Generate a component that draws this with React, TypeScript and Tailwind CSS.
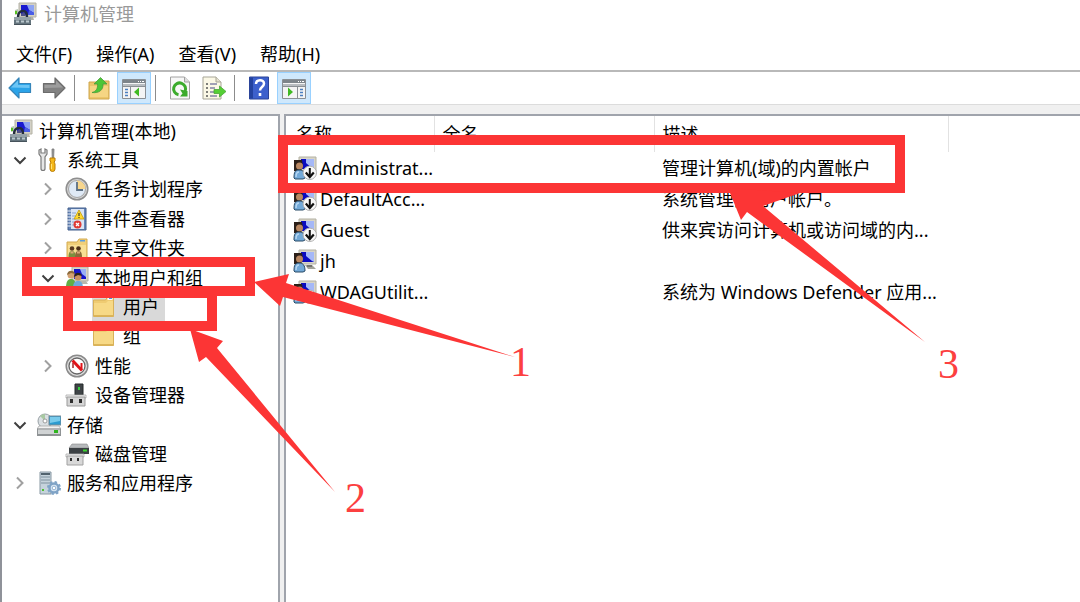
import { useState, type ReactNode } from "react";

/* ---------- icons ---------- */

function Svg({ size = 24, children }: { size?: number; children: ReactNode }) {
  return (
    <svg width={size} height={size} viewBox="0 0 24 24" aria-hidden="true" className="block shrink-0">
      {children}
    </svg>
  );
}

function ComputerIcon() {
  return (
    <Svg>
      <path d="M6 1h17v14H6z" fill="#d3d1c6" stroke="#b4b2a5" strokeWidth="1" />
      <path d="M8 3h13v10H8z" fill="#1a1ad0" />
      <path d="M14 3h7v8l-5-3z" fill="#8ea4f3" />
      <path d="M16 8l5 3v2h-6z" fill="#4a5ee6" />
      <path d="M15 15h5l1 3h-5z" fill="#b3b2a8" />
      <path d="M2 8l3-1 1 5-4 1z" fill="#b7c6b4" />
      <path d="M2 9h2v3H2z" fill="#58c322" />
      <path d="M5 15c0-4 2-6 5-6s4 2 4 6" fill="none" stroke="#222c3c" strokeWidth="2.400" />
      <path d="M8 12l3-2 2 4H8z" fill="#4c4f86" />
      <path d="M1 15h17v4H1z" fill="#94a1a8" />
      <path d="M1 18h17v5H1z" fill="#64747d" />
      <path d="M3 18.500h3v2H3zM8 18.500h3v2H8zM13 18.500h3v2h-3z" fill="#bac7cd" />
      <path d="M1 22h17v1H1z" fill="#46535b" />
    </Svg>
  );
}

function ToolsIcon() {
  return (
    <Svg>
      <path
        d="M2 2v4l2 3v11.500a2 2 0 0 0 4 0V9l2-3V2L8 1v4H4V1z"
        fill="#e6e6e6"
        stroke="#7b7b7b"
        strokeWidth="1.200"
      />
      <path d="M15 1h2l-.4 9h-1.400z" fill="#9a9a9a" stroke="#777" strokeWidth="0.800" />
      <path d="M13 10h5v3l-1 1 1 2v5a2 2 0 0 1-5 0v-5l1-2-1-1z" fill="#f5b819" stroke="#b97c08" strokeWidth="1" />
      <path d="M14.500 16v5" stroke="#ffe37a" strokeWidth="1" />
    </Svg>
  );
}

function ClockIcon() {
  return (
    <Svg>
      <circle cx="12" cy="12" r="10.800" fill="#d6d6d6" stroke="#8f8f8f" strokeWidth="1.500" />
      <circle cx="12" cy="12" r="8.500" fill="#dfe9f5" stroke="#a5a5a5" strokeWidth="1" />
      <path d="M12 12V3.500a8.500 8.500 0 0 1 8.500 8.500z" fill="#f8d68c" />
      <path d="M12 5v8h6" fill="none" stroke="#5c6f83" strokeWidth="1.800" />
    </Svg>
  );
}

function EventIcon() {
  return (
    <Svg>
      <path d="M3 1h18v22H3z" fill="#6585b7" stroke="#435f8c" strokeWidth="1" />
      <path d="M6 2h13v20H6z" fill="#d9e4f4" />
      <path d="M7 6h4M7 9h4M7 12h4M7 15h4M7 18h4" stroke="#8da5cd" strokeWidth="1" />
      <path d="M2 4h4M2 7h4M2 10h4M2 13h4M2 16h4M2 19h4" stroke="#e9eef6" strokeWidth="1.200" />
      <path d="M14 3l5 9H9z" fill="#ffd92e" stroke="#c59a08" strokeWidth="0.800" />
      <path d="M13.500 6h1v3h-1zM13.500 10h1v1h-1z" fill="#222" />
      <circle cx="12.500" cy="17.500" r="4" fill="#e03a35" />
      <path d="M11 16l3 3M14 16l-3 3" stroke="#fff" strokeWidth="1.300" />
    </Svg>
  );
}

function SharedFolderIcon() {
  return (
    <Svg>
      <path d="M2 6h10l2-3h8v19H2z" fill="#f1cf78" stroke="#d3ab50" strokeWidth="1" />
      <path d="M15 4h5v1.500h-5z" fill="#5b9fe0" />
      <path d="M3 9h18v12H3z" fill="#f8df95" />
      <circle cx="7" cy="12.500" r="2.300" fill="#5a3a20" />
      <circle cx="13.500" cy="12.500" r="2.300" fill="#4e3018" />
      <path d="M3.500 21c0-4 1-6 3.500-6s3.500 2 3.500 6z" fill="#7a8f3e" />
      <path d="M10 21c0-4 1-6 3.500-6s3.500 2 3.500 6z" fill="#8a6a3a" />
      <path d="M5.500 15.500h3v2h-3zM12 15.500h3v2h-3z" fill="#d9a878" />
    </Svg>
  );
}

function UsersIcon() {
  return (
    <Svg>
      <path d="M7 1h16v14H7z" fill="#d8d5c7" stroke="#b3b1a3" strokeWidth="1" />
      <path d="M9 3h12v10H9z" fill="#1414cc" />
      <path d="M15 3h6v8l-4-3z" fill="#9ab0f5" />
      <path d="M14 15h7l2 3h-8z" fill="#b9b8ad" />
      <circle cx="6" cy="9" r="3.500" fill="#d2a071" />
      <path d="M2 9c0-5 7-6 8-1l-4-1z" fill="#8c6a3c" />
      <path d="M1 22c0-7 2-9 5-9s5 2 5 9z" fill="#63ad46" />
      <circle cx="13" cy="11" r="3.500" fill="#c78f60" />
      <path d="M9 11c0-5 7-6 8-1l-4-1z" fill="#2b211a" />
      <path d="M8 23c0-7 2-8 5-8s5 1 5 8z" fill="#6fa9db" />
    </Svg>
  );
}

function FolderIcon() {
  return (
    <Svg>
      <path d="M.5 5h12l2-3h6v19.500H.5z" fill="#efcb72" stroke="#d8b15a" strokeWidth="1" />
      <path d="M14.500 3h5v2h-5z" fill="#fff" />
      <path d="M16 3h3v1h-3z" fill="#4d98e0" />
      <path d="M1 8h12l2-2h5v15H1z" fill="#f7d986" />
      <path d="M1 20h19.500v1.500H1z" fill="#dcb559" />
    </Svg>
  );
}

function PerformanceIcon() {
  return (
    <Svg>
      <circle cx="12" cy="12" r="10.800" fill="#dedede" stroke="#8a8a8a" strokeWidth="1.500" />
      <circle cx="12" cy="12" r="8" fill="#fff" stroke="#666" strokeWidth="1.300" />
      <path d="M8 14V9" stroke="#a3262a" strokeWidth="1.500" />
      <path d="M7.500 6.500L17 16.500" fill="none" stroke="#e0141a" strokeWidth="3" />
      <path d="M16.500 15V9" stroke="#e0141a" strokeWidth="2" />
    </Svg>
  );
}

function DeviceIcon() {
  return (
    <Svg>
      <path d="M10 1h8v11h-8z" fill="#3f4447" stroke="#24282a" strokeWidth="1" />
      <path d="M13 4h2v3h-2z" fill="#36d13f" />
      <path d="M1 12h20v3H1z" fill="#f3f3f3" stroke="#a9a9a9" strokeWidth="0.800" />
      <path d="M2 14h18v9H2z" fill="#d5d5d5" stroke="#9b9b9b" strokeWidth="1" />
      <path d="M5 16h3v4H5zM14 16h3v4h-3z" fill="#2e2e2e" />
    </Svg>
  );
}

function StorageIcon() {
  return (
    <Svg>
      <circle cx="8" cy="8" r="7" fill="#dadfe2" stroke="#98a0a5" strokeWidth="1" />
      <path d="M8 8L3 3a7 7 0 0 1 5-2z" fill="#a9c9a2" />
      <circle cx="8" cy="8" r="2" fill="#fff" stroke="#888" strokeWidth="0.800" />
      <path d="M12 3h12v9H12z" fill="#2b9bd0" stroke="#7a8b96" strokeWidth="1" />
      <path d="M13 4h10v4l-10 2z" fill="#79cbec" />
      <path d="M2 13h20l2 3H0z" fill="#f2f2f2" stroke="#aaa" strokeWidth="0.800" />
      <path d="M0 15.500h24V23H0z" fill="#8f9395" />
      <path d="M1 16.500h22V21H1z" fill="#d0d3d4" />
      <path d="M17 17h4v3h-4z" fill="#2fb51f" />
    </Svg>
  );
}

function DiskIcon() {
  return (
    <Svg>
      <path d="M7 2h15l2 4H4z" fill="#b7babc" stroke="#888" strokeWidth="0.600" />
      <path d="M4 6h20v6H4z" fill="#3b4043" />
      <path d="M18 7.500h4v2h-4z" fill="#3bd42f" />
      <path d="M1 12h18v3H1z" fill="#f3f3f3" stroke="#a9a9a9" strokeWidth="0.800" />
      <path d="M2 14h16v9H2z" fill="#d8d8d8" stroke="#a1a1a1" strokeWidth="1" />
      <path d="M5 16h2v3H5zM12 16h2v3h-2z" fill="#2e2e2e" />
    </Svg>
  );
}

function ServicesIcon() {
  return (
    <Svg>
      <path d="M3 1h11v22H3z" fill="#c6d3dc" stroke="#8998a3" strokeWidth="1" />
      <path d="M4 2h9v2H4z" fill="#52636e" />
      <path d="M4 6h9M4 9h9M4 12h9" stroke="#7f929e" strokeWidth="1.200" />
      <path d="M5 18h2v2H5z" fill="#4dc32f" />
      <circle cx="17" cy="17" r="4.500" fill="#dbe8f4" stroke="#7fa3c6" strokeWidth="2.500" />
      <circle cx="17" cy="17" r="6" fill="none" stroke="#7fa3c6" strokeWidth="2" strokeDasharray="2.400 2.300" />
      <circle cx="17" cy="17" r="1.800" fill="#fff" stroke="#7fa3c6" strokeWidth="0.800" />
    </Svg>
  );
}

function AccountIcon({ disabled }: { disabled: boolean }) {
  return (
    <Svg>
      <path d="M6 1h17v14H6z" fill="#d8d5c7" stroke="#b3b1a3" strokeWidth="1" />
      <path d="M8 3h13v10H8z" fill="#0b0bc0" />
      <path d="M13 3h8v10l-2-1-6-5z" fill="#a5b8f7" />
      <path d="M12 16h7l4 4h-8z" fill="#a3a39a" />
      <path d="M14 17h5" stroke="#444" strokeWidth="1" />
      <path d="M1 4h8l1 6-2 5H1z" fill="#2c1f18" />
      <circle cx="6.500" cy="10" r="3.500" fill="#b98761" />
      <path d="M1 22c0-6 1-8 5-8s6 2 6 8l-2 1H2z" fill="#72a9d8" stroke="#294a66" strokeWidth="1" />
      <path d="M3 21c0-4 1-5 3-5" fill="none" stroke="#b5d6f2" strokeWidth="1.500" />
      {disabled && (
        <>
          <circle cx="16.800" cy="16.800" r="6.700" fill="#f8f8f8" stroke="#b0b0b0" strokeWidth="1" />
          <path d="M16.800 12v8" stroke="#111" strokeWidth="2" />
          <path d="M12.800 16.500l4 4.500 4-4.500" fill="none" stroke="#111" strokeWidth="2.200" />
        </>
      )}
    </Svg>
  );
}

function ArrowLeftIcon() {
  return (
    <Svg>
      <path
        d="M1 12L11 2v5.500h11.500v9H11V22z"
        fill="#2ba3e8"
        stroke="#3585ba"
        strokeWidth="1.200"
        strokeLinejoin="round"
      />
      <path d="M3 11.500l7-7V9h11.500v3z" fill="#6cc5f5" />
    </Svg>
  );
}

function ArrowRightIcon() {
  return (
    <Svg>
      <path
        d="M23 12L13 2v5.500H1.500v9H13V22z"
        fill="#828282"
        stroke="#6c6c6c"
        strokeWidth="1.200"
        strokeLinejoin="round"
      />
      <path d="M21 11.500l-7-7V9H2.500v3z" fill="#9d9d9d" />
    </Svg>
  );
}

function UpFolderIcon() {
  return (
    <Svg>
      <path d="M2 6h8l2-1h10v18H2z" fill="#ebc56a" stroke="#cfa64c" strokeWidth="1" />
      <path d="M3 10h18v11H3z" fill="#f5d583" />
      <path
        d="M5 16.500c4-1 6-4 5.500-8.500H7l6.500-6.500L20 8h-4c.5 6-4 9.500-11 8.500z"
        fill="#4cc637"
        stroke="#4a9c3b"
        strokeWidth="0.800"
        strokeLinejoin="round"
      />
    </Svg>
  );
}

function PaneIcon({ side }: { side: "left" | "right" }) {
  return (
    <Svg>
      <path d="M.5 3.500h23v19H.5z" fill="#f4f4f4" stroke="#8a8f94" strokeWidth="1" />
      <path d="M1 4h22v3H1z" fill="#7d848a" />
      <path d="M16 5h1v1h-1zM18 5h1v1h-1zM20 5h2v1h-2z" fill="#fff" />
      <path d="M1 8h22v2H1z" fill="#b8bcc0" />
      {side === "left" ? (
        <>
          <path d="M8.500 10v12M.5 10.500h23" stroke="#8a8f94" />
          <path d="M3 13.500h3M3 16.500h3M3 19.500h3" stroke="#4b7fc0" strokeWidth="1.500" />
          <path d="M17 11.500v9L12 16z" fill="#3fb922" />
        </>
      ) : (
        <>
          <path d="M15.500 10v12M.5 10.500h23" stroke="#8a8f94" />
          <path d="M18 13.500h3M18 16.500h3M18 19.500h3" stroke="#4b7fc0" strokeWidth="1.500" />
          <path d="M6 11.500v9l5-4.500z" fill="#3fb922" />
        </>
      )}
    </Svg>
  );
}

function RefreshIcon() {
  return (
    <Svg>
      <path d="M2.500 1h14l5 5v17h-19z" fill="#f7f7f7" stroke="#a2a2a2" strokeWidth="1" />
      <path d="M16.500 1v5h5" fill="#ddd" stroke="#a2a2a2" strokeWidth="1" />
      <path d="M10.500 18.800A6 6 0 1 1 17 15.500" fill="none" stroke="#3bab2c" strokeWidth="3" />
      <path d="M12 13.500l7.500 1.500v5.500H12l2.500-3z" fill="#3bab2c" />
    </Svg>
  );
}

function ExportIcon() {
  return (
    <Svg>
      <path d="M1 1h13l5 5v17H1z" fill="#fbf8e6" stroke="#a7a597" strokeWidth="1" />
      <path d="M14 1v5h5" fill="#e3e0cf" stroke="#a7a597" strokeWidth="1" />
      <path d="M4 8h2M4 12h2M4 16h2M4 20h2" stroke="#555" strokeWidth="1.500" />
      <path d="M8 8h7M8 12h5M8 16h4M8 20h7" stroke="#8482a5" strokeWidth="1.500" />
      <path d="M12 13.500h5.500V10l6.500 5.500-6.500 5.500v-3.500H12z" fill="#55cf35" stroke="#4aa538" strokeWidth="0.800" />
    </Svg>
  );
}

function HelpIcon() {
  return (
    <Svg>
      <path d="M2.500 1h19v22h-19z" fill="#3c60cc" stroke="#2b4499" strokeWidth="1" />
      <path d="M3 1.500h3v21H3z" fill="#23429f" />
      <path d="M9 8c0-5 8-5 8-.5 0 3.500-4 3.500-4 7" fill="none" stroke="#fff" strokeWidth="2.500" />
      <path d="M11.700 17h2.600v3h-2.600z" fill="#fff" />
    </Svg>
  );
}

function Chevron({ open }: { open: boolean }) {
  return (
    <svg width="14" height="14" viewBox="0 0 14 14" aria-hidden="true">
      {open ? (
        <path d="M1.500 4.500L7 10l5.500-5.500" fill="none" stroke="#404040" strokeWidth="2" />
      ) : (
        <path d="M4 1.500L9.500 7 4 12.500" fill="none" stroke="#a0a0a0" strokeWidth="2" />
      )}
    </svg>
  );
}

/* ---------- data ---------- */

type Node = {
  label: string;
  level: 0 | 1 | 2 | 3;
  icon: ReactNode;
  open?: boolean;
};

const nodes: Node[] = [
  { label: "计算机管理(本地)", level: 0, icon: <ComputerIcon /> },
  { label: "系统工具", level: 1, icon: <ToolsIcon />, open: true },
  { label: "任务计划程序", level: 2, icon: <ClockIcon />, open: false },
  { label: "事件查看器", level: 2, icon: <EventIcon />, open: false },
  { label: "共享文件夹", level: 2, icon: <SharedFolderIcon />, open: false },
  { label: "本地用户和组", level: 2, icon: <UsersIcon />, open: true },
  { label: "用户", level: 3, icon: <FolderIcon /> },
  { label: "组", level: 3, icon: <FolderIcon /> },
  { label: "性能", level: 2, icon: <PerformanceIcon />, open: false },
  { label: "设备管理器", level: 2, icon: <DeviceIcon /> },
  { label: "存储", level: 1, icon: <StorageIcon />, open: true },
  { label: "磁盘管理", level: 2, icon: <DiskIcon /> },
  { label: "服务和应用程序", level: 1, icon: <ServicesIcon />, open: false },
];

const indent = ["pl-1.5", "pl-1.5", "pl-[34px]", "pl-[62px]"];

const accounts = [
  { name: "Administrat...", description: "管理计算机(域)的内置帐户", disabled: true },
  { name: "DefaultAcc...", description: "系统管理的用户帐户。", disabled: true },
  { name: "Guest", description: "供来宾访问计算机或访问域的内...", disabled: true },
  { name: "jh", description: "", disabled: false },
  { name: "WDAGUtilit...", description: "系统为 Windows Defender 应用...", disabled: true },
];

/* ---------- parts ---------- */

function ToolButton({ label, pressed, children }: { label: string; pressed?: boolean; children: ReactNode }) {
  return (
    <button
      type="button"
      aria-label={label}
      aria-pressed={pressed}
      className={
        pressed
          ? "flex h-8 w-[34px] items-center justify-center border border-[#99d1ff] bg-[#cfe8fc]"
          : "flex h-8 w-8 items-center justify-center"
      }
    >
      {children}
    </button>
  );
}

function Separator() {
  return <div className="mr-1.5 ml-0.5 h-[26px] w-px bg-[#8c8c8c]" />;
}

function TreeRow({ node, selected, onSelect }: { node: Node; selected: boolean; onSelect: () => void }) {
  return (
    <li role="treeitem" aria-level={node.level + 1} aria-selected={selected} className={`flex ${indent[node.level]}`}>
      {node.level > 0 && (
        <span className="mr-1 flex w-6 items-center justify-center">
          {node.open !== undefined && (
            <button type="button" aria-label={`${node.open ? "折叠" : "展开"} ${node.label}`}>
              <Chevron open={node.open} />
            </button>
          )}
        </span>
      )}
      <button
        type="button"
        onClick={onSelect}
        className={`flex items-center gap-1.5 pr-1.5 whitespace-nowrap ${selected ? "bg-[#d9d9d9]" : ""}`}
      >
        <span className="flex w-[25px] justify-center">{node.icon}</span>
        {node.label}
      </button>
    </li>
  );
}

function Annotations() {
  return (
    <div className="pointer-events-none absolute inset-y-0 right-0 -left-0.5 font-['Liberation_Serif',serif] text-[42px] leading-[42px] text-[#fc4040]">
      <div className="absolute top-[135px] left-[278px] h-[58px] w-[627px] border-10 border-[#fc3535]" />
      <div className="absolute top-[257px] left-[22px] h-[39px] w-[233px] border-10 border-[#fc3535]" />
      <div className="absolute top-[288px] left-[63px] h-[43px] w-[154px] border-10 border-[#fc3535]" />
      <svg width="1080" height="602" viewBox="0 0 1080 602" className="absolute top-0 left-0" aria-hidden="true">
        <g fill="#fc3535">
          <path d="M254 282L289 274 286 283 515 357 283 297 280 306z" />
          <path d="M190 329L223 341 217 348 335 492 206 357 199 362z" />
          <path d="M728 188L800 193 763 206 925 342 747 212 741 220z" />
        </g>
      </svg>
      <span className="absolute top-[341px] left-[510px]">1</span>
      <span className="absolute top-[477px] left-[345px]">2</span>
      <span className="absolute top-[343px] left-[938px]">3</span>
    </div>
  );
}

export default function App() {
  const [selected, setSelected] = useState("用户");

  return (
    <div className="relative flex min-h-screen flex-col overflow-hidden border-l-2 border-[#8f9299] bg-[#f0f0f0] font-['Noto_Sans','Noto_Sans_CJK_SC',sans-serif] text-lg leading-6 text-black">
      <header className="flex h-[30px] items-center gap-[7px] bg-white pb-0.5 pl-[11px] text-[#999]">
        <ComputerIcon />
        <h1>计算机管理</h1>
      </header>

      <nav className="flex h-[42px] items-center gap-6 border-b-2 border-[#b9b9b9] bg-white pt-[7px] pl-3.5">
        {["文件(F)", "操作(A)", "查看(V)", "帮助(H)"].map((item) => (
          <button key={item} type="button">
            {item}
          </button>
        ))}
      </nav>

      <div
        role="toolbar"
        aria-label="工具栏"
        className="flex h-[33px] items-end gap-0.5 border-b border-[#dcdcdc] bg-white pl-0.5"
      >
        <ToolButton label="后退">
          <ArrowLeftIcon />
        </ToolButton>
        <ToolButton label="前进">
          <ArrowRightIcon />
        </ToolButton>
        <div className="flex h-8 items-center">
          <Separator />
        </div>
        <ToolButton label="向上一级">
          <UpFolderIcon />
        </ToolButton>
        <ToolButton label="显示/隐藏控制台树" pressed>
          <PaneIcon side="left" />
        </ToolButton>
        <div className="flex h-8 items-center">
          <Separator />
        </div>
        <ToolButton label="刷新">
          <RefreshIcon />
        </ToolButton>
        <ToolButton label="导出列表">
          <ExportIcon />
        </ToolButton>
        <div className="flex h-8 items-center">
          <Separator />
        </div>
        <ToolButton label="帮助">
          <HelpIcon />
        </ToolButton>
        <ToolButton label="显示/隐藏操作窗格" pressed>
          <PaneIcon side="right" />
        </ToolButton>
      </div>

      <main className="flex flex-1 gap-1 pt-[9px]">
        <aside className="w-[278px] shrink-0 border-t-2 border-r-2 border-[#a0a4ac] bg-white">
          <ul role="tree" aria-label="控制台树" className="grid h-[382px] auto-rows-fr">
            {nodes.map((node) => (
              <TreeRow
                key={node.label}
                node={node}
                selected={node.label === selected}
                onSelect={() => setSelected(node.label)}
              />
            ))}
          </ul>
        </aside>

        <section className="min-w-0 flex-1 border-t-2 border-l-2 border-[#a0a4ac] bg-white">
          <table className="w-[662px] table-fixed border-collapse text-left whitespace-nowrap">
            <colgroup>
              <col className="w-[148px]" />
              <col className="w-[220px]" />
              <col className="w-[294px]" />
            </colgroup>
            <thead>
              <tr className="h-9">
                <th className="border-r border-[#e2e2e2] pl-2.5 font-normal">名称</th>
                <th className="border-r border-[#e2e2e2] pl-2 font-normal">全名</th>
                <th className="border-r border-[#e2e2e2] pl-2 font-normal">描述</th>
              </tr>
            </thead>
            <tbody>
              {accounts.map((account) => (
                <tr key={account.name} className="h-[31px]">
                  <td className="pl-[7px]">
                    <span className="flex items-center gap-[3px]">
                      <AccountIcon disabled={account.disabled} />
                      {account.name}
                    </span>
                  </td>
                  <td />
                  <td className="pl-2">{account.description}</td>
                </tr>
              ))}
            </tbody>
          </table>
        </section>
      </main>

      <Annotations />
    </div>
  );
}
